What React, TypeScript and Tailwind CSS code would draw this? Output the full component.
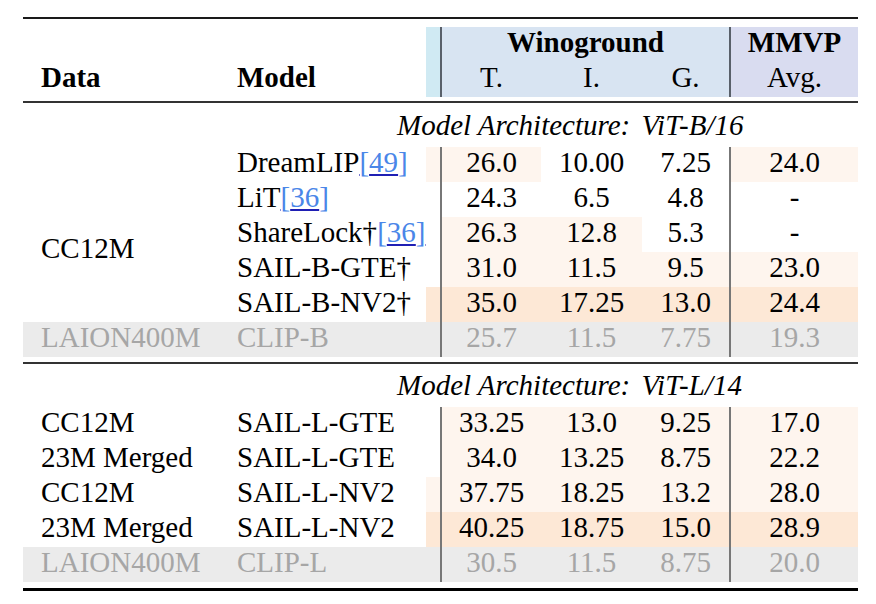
import React from 'react';

/** ------------------------------------------------
 *  Table layout + shades
 *  ------------------------------------------------ */
const cols = 'grid grid-cols-[196px_207px_14px_101px_101px_87px_129px]';
const cell = 'h-[35px] leading-[31px] whitespace-nowrap';

const L = 'bg-[#fef5ee]';
const D = 'bg-[#fde8d6]';
const G = 'bg-[#ebebeb]';
const W = '';

type Row = {
  data?: string;
  dataSpan?: number;
  skipData?: boolean;
  model: React.ReactNode;
  vals: string[];
  // gap, T, I, G, MMVP
  shade: string[];
  muted?: boolean;
};

function Ref({ n }: { n: number }) {
  return (
    <span className="text-[#4a86e8] underline decoration-[#1f1fb4] decoration-[1.5px] underline-offset-[2px]">
      [{n}]
    </span>
  );
}

function BodyRow({ row }: { row: Row }) {
  const muted = row.muted ? 'text-[#a6a6a6]' : '';
  const rowBg = row.muted ? G : W;
  return (
    <>
      {!row.skipData &&
        (row.dataSpan ? (
          <div className={`row-span-4 pl-[18px] pt-[51px] leading-[31px] ${muted}`}>{row.data}</div>
        ) : (
          <div className={`${cell} pl-[18px] ${rowBg} ${muted}`}>{row.data}</div>
        ))}
      <div className={`${cell} pl-[18px] ${rowBg} ${muted}`}>{row.model}</div>
      <div className={`${cell} ${row.shade[0]}`} />
      <div className={`${cell} text-center border-l-2 border-[#777] ${row.shade[1]} ${muted}`}>{row.vals[0]}</div>
      <div className={`${cell} text-center ${row.shade[2]} ${muted}`}>{row.vals[1]}</div>
      <div className={`${cell} text-center ${row.shade[3]} ${muted}`}>{row.vals[2]}</div>
      <div className={`${cell} text-center border-l-2 border-[#777] ${row.shade[4]} ${muted}`}>{row.vals[3]}</div>
    </>
  );
}

const baseRows: Row[] = [
  { data: '', model: <>DreamLIP<Ref n={49} /></>, vals: ['26.0', '10.00', '7.25', '24.0'], shade: [L, L, W, W, L] },
  { data: 'CC12M', dataSpan: 4, model: <>LiT<Ref n={36} /></>, vals: ['24.3', '6.5', '4.8', '-'], shade: [W, W, W, W, W] },
  { skipData: true, model: <>ShareLock†<Ref n={36} /></>, vals: ['26.3', '12.8', '5.3', '-'], shade: [W, L, L, W, W] },
  { skipData: true, model: 'SAIL-B-GTE†', vals: ['31.0', '11.5', '9.5', '23.0'], shade: [W, L, L, L, L] },
  { skipData: true, model: 'SAIL-B-NV2†', vals: ['35.0', '17.25', '13.0', '24.4'], shade: [D, D, D, D, D] },
  { data: 'LAION400M', model: 'CLIP-B', vals: ['25.7', '11.5', '7.75', '19.3'], shade: [G, G, G, G, G], muted: true },
];

const largeRows: Row[] = [
  { data: 'CC12M', model: 'SAIL-L-GTE', vals: ['33.25', '13.0', '9.25', '17.0'], shade: [W, L, L, L, L] },
  { data: '23M Merged', model: 'SAIL-L-GTE', vals: ['34.0', '13.25', '8.75', '22.2'], shade: [W, L, L, L, L] },
  { data: 'CC12M', model: 'SAIL-L-NV2', vals: ['37.75', '18.25', '13.2', '28.0'], shade: [L, L, L, L, L] },
  { data: '23M Merged', model: 'SAIL-L-NV2', vals: ['40.25', '18.75', '15.0', '28.9'], shade: [D, D, D, D, D] },
  { data: 'LAION400M', model: 'CLIP-L', vals: ['30.5', '11.5', '8.75', '20.0'], shade: [G, G, G, G, G], muted: true },
];

/** ------------------------------------------------
 *  Page
 *  ------------------------------------------------ */
export default function App() {
  return (
    <div className="min-h-screen bg-white pt-[17px] pl-[23px] font-['Liberation_Serif',serif] text-[29px] text-black">
      <div className="w-[835px]">
        {/* top rule */}
        <div className="h-[2px] bg-[#1a1a1a]" />

        {/* header */}
        <div className={`mt-[8px] ${cols}`}>
          <div className={cell} />
          <div className={cell} />
          <div className={`${cell} bg-[#d0eaf3]`} />
          <div className={`${cell} col-span-3 text-center font-bold bg-[#d8e4f2] border-l-2 border-[#59606a]`}>Winoground</div>
          <div className={`${cell} text-center font-bold bg-[#d9dcf0] border-l-2 border-[#59606a]`}>MMVP</div>

          <div className={`${cell} pl-[18px] font-bold`}>Data</div>
          <div className={`${cell} pl-[18px] font-bold`}>Model</div>
          <div className={`${cell} bg-[#d0eaf3]`} />
          <div className={`${cell} text-center bg-[#d8e4f2] border-l-2 border-[#59606a]`}>T.</div>
          <div className={`${cell} text-center bg-[#d8e4f2]`}>I.</div>
          <div className={`${cell} text-center bg-[#d8e4f2]`}>G.</div>
          <div className={`${cell} text-center bg-[#d9dcf0] border-l-2 border-[#59606a]`}>Avg.</div>
        </div>
        <div className="mt-[4px] h-[2px] bg-[#333]" />

        {/* ViT-B/16 */}
        <div className="h-[44px] pt-[7px] pl-[374px] italic leading-[31px] whitespace-nowrap">
          Model Architecture: <span className="ml-[4px]">ViT-B/16</span>
        </div>
        <div className={cols}>
          {baseRows.map((r, i) => (
            <BodyRow key={`b-${i}`} row={r} />
          ))}
        </div>
        <div className="mt-[5px] h-[2px] bg-[#333]" />

        {/* ViT-L/14 */}
        <div className="h-[43px] pt-[6px] pl-[374px] italic leading-[31px] whitespace-nowrap">
          Model Architecture: <span className="ml-[4px]">ViT-L/14</span>
        </div>
        <div className={cols}>
          {largeRows.map((r, i) => (
            <BodyRow key={`l-${i}`} row={r} />
          ))}
        </div>

        {/* bottom rule */}
        <div className="mt-[6px] h-[3px] bg-black" />
      </div>
    </div>
  );
}
